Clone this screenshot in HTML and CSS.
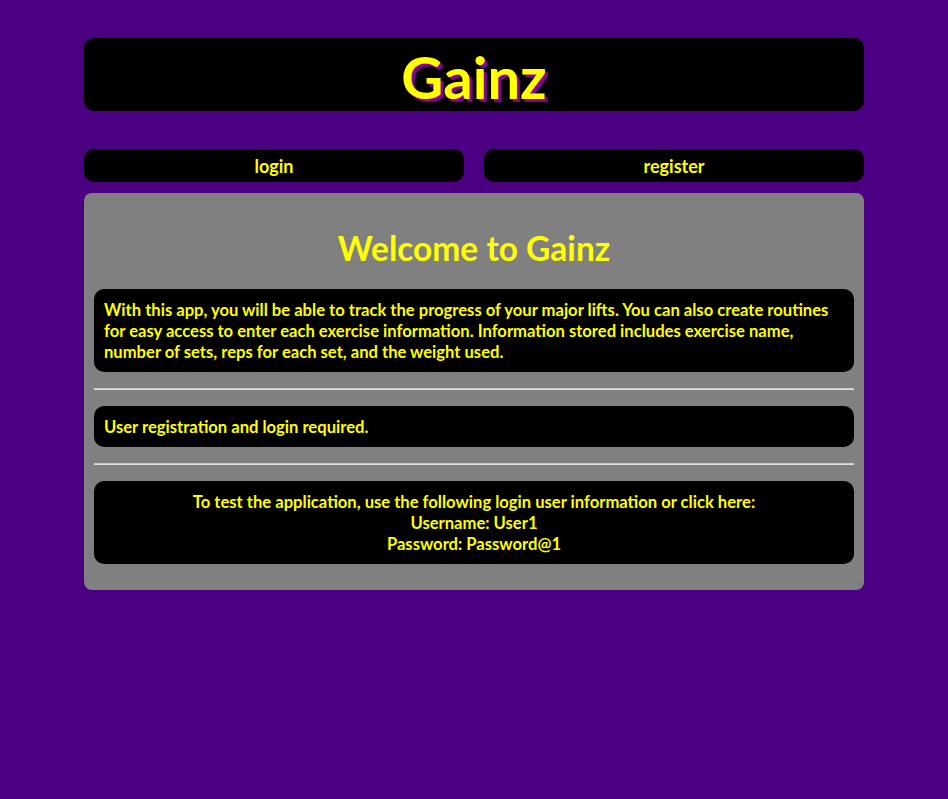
FILE: index.html
```html
<!DOCTYPE html>
<html>
<head>
<meta charset="utf-8">
<link rel="stylesheet" href="styles.css">
</head>
<body>
<div class="page">
  <header class="brand"><h1>Gainz</h1></header>
  <nav class="nav">
    <a class="nav-btn" href="#">login</a>
    <a class="nav-btn" href="#">register</a>
  </nav>
  <main class="panel">
    <h2 class="welcome">Welcome to Gainz</h2>
    <div class="box">With this app, you will be able to track the progress of your major lifts. You can also create routines for easy access to enter each exercise information. Information stored includes exercise name, number of sets, reps for each set, and the weight used.</div>
    <hr class="rule">
    <div class="box">User registration and login required.</div>
    <hr class="rule">
    <div class="box center">To test the application, use the following login user information or click here:<br>Username: User1<br>Password: Password@1</div>
  </main>
</div>
</body>
</html>
```

FILE: styles.css
```css
html, body {
  margin: 0;
  padding: 0;
  background: #4b0082;
}
body {
  font-family: "Lato", "Noto Sans", sans-serif;
  font-weight: 700;
  color: #ffff00;
}
.page {
  width: 780px;
  margin: 0 auto;
  padding-top: 38px;
}
.brand {
  background: #000;
  border-radius: 10px;
  height: 73px;
  display: flex;
  align-items: center;
  justify-content: center;
}
.brand h1 {
  margin: 0;
  padding-top: 4px;
  font-size: 58px;
  line-height: 1;
  font-weight: 700;
  text-shadow: 3px 3px 1px #8a00a0;
}
.nav {
  display: grid;
  grid-template-columns: 1fr 1fr;
  gap: 20px;
  margin-top: 38px;
}
.nav-btn {
  background: #000;
  color: #ffff00;
  text-decoration: none;
  border-radius: 10px;
  height: 33px;
  display: flex;
  align-items: center;
  justify-content: center;
  font-size: 18px;
}
.panel {
  margin-top: 11px;
  background: #808080;
  border-radius: 8px;
  padding: 22px 10px 26px;
}
.welcome {
  margin: 0 0 8px;
  text-align: center;
  font-size: 33.5px;
  line-height: 66px;
}
.box {
  background: #000;
  border-radius: 10px;
  padding: 11px 10px 9px;
  font-size: 16.6px;
  line-height: 21px;
}
.center { text-align: center; }
.rule {
  border: 0;
  border-top: 1px solid #c8c8c8;
  border-bottom: 1px solid #e0e0e0;
  margin: 16px 0;
}
```
